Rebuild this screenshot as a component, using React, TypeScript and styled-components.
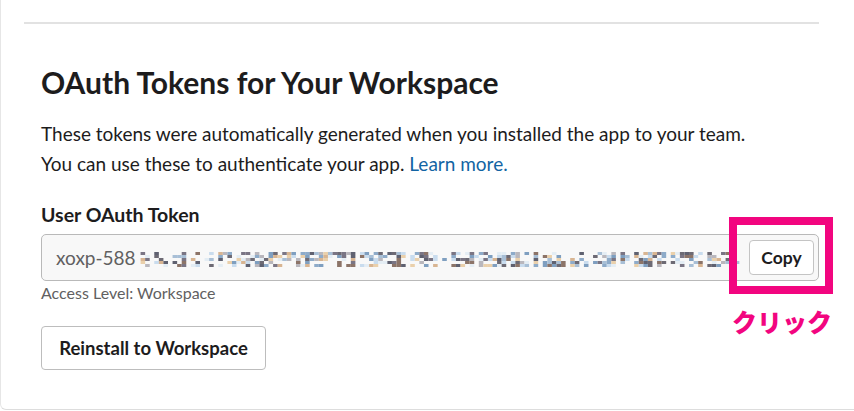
import styled, { createGlobalStyle } from "styled-components";

const GlobalStyle = createGlobalStyle`
  html, body {
    margin: 0;
    padding: 0;
    background: #ffffff;
  }
  body {
    font-family: "Lato", "Noto Sans", sans-serif;
    color: #1d1c1d;
  }
  * {
    box-sizing: border-box;
  }
`;

const PINK = "#f2057f";

// blurred token, drawn as a coarse mosaic
const palette = [
  "#6d6a74",
  "#7a7584",
  "#5f6170",
  "#8c7468",
  "#8eabc9",
  "#7f9fc0",
  "#a8bfd6",
  "#c9dcee",
  "#d8b592",
  "#ead0ab",
  "#b9b7bd",
  "#e4edf4",
];

const CELL_W = 4.5;
const CELL_H = 3;
const ROWS = 5;

function makeCells(width: number) {
  let seed = 588123;
  const rand = () => {
    seed = (seed * 16807) % 2147483647;
    return seed / 2147483647;
  };
  for (let i = 0; i < 20; i++) rand();
  const cells: { x: number; y: number; c: string }[] = [];
  const cols = Math.floor(width / CELL_W);
  for (let col = 0; col < cols; col++) {
    if (rand() < 0.12) continue;
    for (let row = 0; row < ROWS; row++) {
      if (rand() < 0.38) continue;
      const c = palette[Math.floor(rand() * palette.length)];
      cells.push({ x: col * CELL_W, y: row * CELL_H, c });
    }
  }
  return cells;
}

const MOSAIC_W = 598;
const cells = makeCells(MOSAIC_W);

export default function App() {
  return (
    <>
      <GlobalStyle />
      <Panel>
        <Divider />
        <Section>
          <Title>OAuth Tokens for Your Workspace</Title>
          <Description>
            These tokens were automatically generated when you installed the app to your team.
            <br />
            You can use these to authenticate your app. <a href="#">Learn more.</a>
          </Description>
          <Label>User OAuth Token</Label>
          <TokenField>
            <TokenText>xoxp-588</TokenText>
            <Mosaic viewBox={`0 0 ${MOSAIC_W} ${ROWS * CELL_H}`} preserveAspectRatio="none">
              {cells.map((cell, i) => (
                <rect key={i} x={cell.x} y={cell.y} width={CELL_W} height={CELL_H} fill={cell.c} />
              ))}
            </Mosaic>
            <CopyButton>Copy</CopyButton>
            <Highlight />
            <ClickNote>クリック</ClickNote>
          </TokenField>
          <Hint>Access Level: Workspace</Hint>
          <ReinstallButton>Reinstall to Workspace</ReinstallButton>
        </Section>
      </Panel>
    </>
  );
}

const Panel = styled.div`
  height: 410px;
  padding: 22px 35px 0 23px;
  border-left: 1px solid #e6e6e6;
  border-bottom: 1px solid #dddddd;
  border-bottom-left-radius: 6px;
`;

const Divider = styled.div`
  height: 2px;
  background: #e2e2e2;
`;

const Section = styled.div`
  display: flex;
  flex-direction: column;
  align-items: flex-start;
  padding: 40px 0 0 17px;
`;

const Title = styled.h2`
  margin: 0;
  font-size: 30px;
  line-height: 36px;
  font-weight: 700;
  color: #1d1c1d;
`;

const Description = styled.p`
  margin: 19px 0 0;
  font-size: 19px;
  line-height: 30px;
  color: #1d1c1d;

  a {
    color: #1264a3;
    text-decoration: none;
  }
`;

const Label = styled.div`
  margin-top: 24px;
  font-size: 19.5px;
  line-height: 24px;
  font-weight: 700;
`;

const TokenField = styled.div`
  position: relative;
  margin-top: 7px;
  width: 100%;
  height: 47px;
  display: flex;
  align-items: center;
  padding: 0 4px 0 14px;
  background: #f8f8f8;
  border: 1px solid #b9b9b9;
  border-radius: 5px;
`;

const TokenText = styled.span`
  font-size: 19px;
  color: #616061;
  white-space: nowrap;
`;

const Mosaic = styled.svg`
  flex: 1;
  height: ${ROWS * CELL_H}px;
  margin: 4px 6px 0 0;
  display: block;
`;

const CopyButton = styled.button`
  flex-shrink: 0;
  width: 65px;
  height: 35px;
  padding: 0;
  background: #ffffff;
  border: 1px solid #c4c4c4;
  border-radius: 4px;
  font-family: "Lato", sans-serif;
  font-size: 17.5px;
  font-weight: 700;
  color: #1d1c1d;
`;

const Highlight = styled.div`
  position: absolute;
  left: 687px;
  top: -18px;
  width: 104px;
  height: 77px;
  border: 8px solid ${PINK};
  pointer-events: none;
`;

const ClickNote = styled.div`
  position: absolute;
  left: 690px;
  top: 69px;
  font-family: "Noto Sans CJK JP", sans-serif;
  font-size: 25px;
  line-height: 34px;
  font-weight: 900;
  color: ${PINK};
  white-space: nowrap;
`;

const Hint = styled.div`
  margin-top: 2px;
  font-size: 16px;
  line-height: 20px;
  color: #616061;
`;

const ReinstallButton = styled.button`
  margin-top: 23px;
  width: 225px;
  height: 44px;
  padding: 0;
  background: #ffffff;
  border: 1px solid #bdbdbd;
  border-radius: 4px;
  font-family: "Lato", sans-serif;
  font-size: 18.5px;
  font-weight: 700;
  color: #1d1c1d;
`;
